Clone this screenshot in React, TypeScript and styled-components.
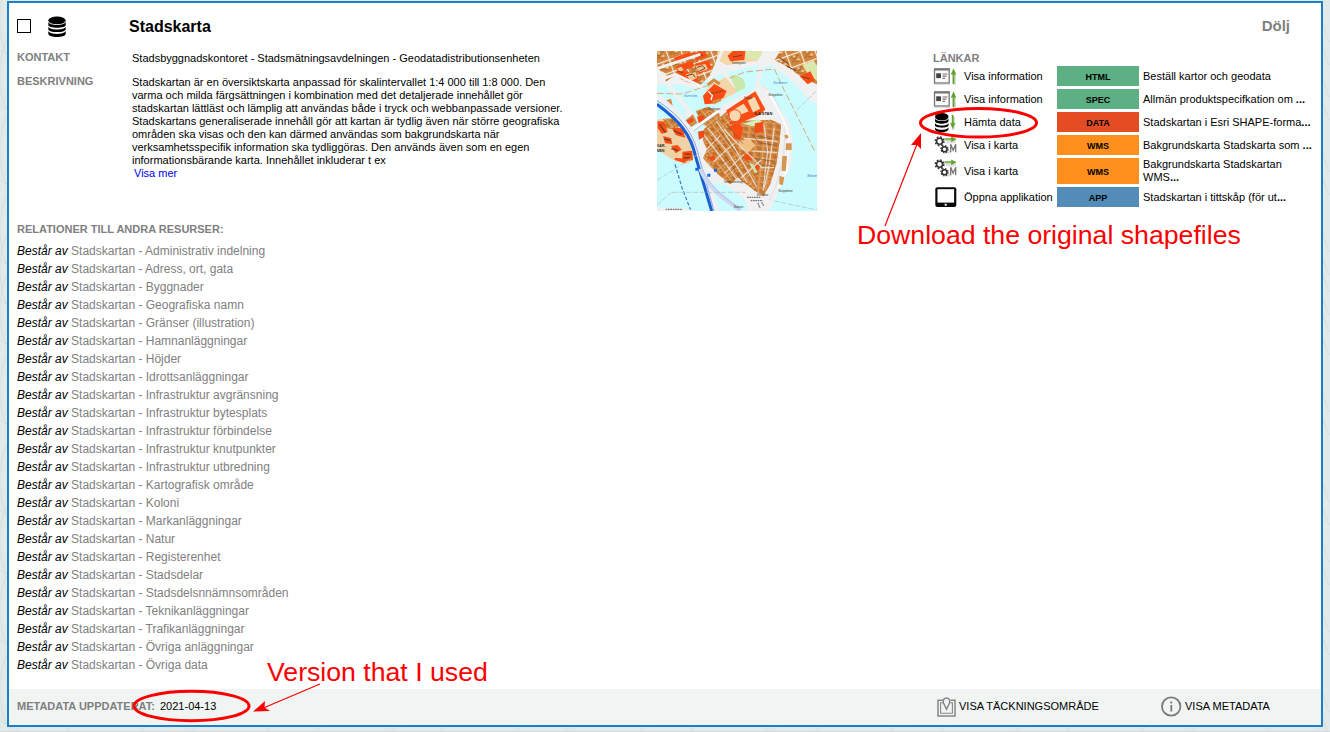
import React from "react";
import styled, { createGlobalStyle } from "styled-components";

const GlobalStyle = createGlobalStyle`
  html, body { margin: 0; padding: 0; }
  body {
    background: #e2eae9;
    font-family: "Liberation Sans", Arial, sans-serif;
    font-size: 11px;
    line-height: 13px;
    color: #000;
    overflow: hidden;
  }
`;

const Page = styled.div`
  position: relative;
  box-sizing: border-box;
  height: 732px;
  padding: 1px 7px 0;
  border-bottom: 1px solid #d4d8d8;
`;

const Backdrop = styled.svg`
  position: absolute;
  left: 0;
  top: 0;
`;

const Card = styled.article`
  position: relative;
  box-sizing: border-box;
  display: flex;
  flex-direction: column;
  height: 726px;
  border: 2px solid #1a7fc6;
  background: #fff;
`;

const Header = styled.header`
  display: flex;
  align-items: center;
  height: 48px;
  padding: 0 31px 0 8px;
`;

const CheckBox = styled.span`
  box-sizing: border-box;
  width: 14px;
  height: 14px;
  margin: 0 17px 2px 0;
  border: 1px solid #000;
  background: #fff;
`;

const TitleIcon = styled.div`
  display: flex;
  width: 81px;
`;

const Title = styled.h1`
  flex: 1;
  margin: 0 0 1px;
  font-size: 16px;
  line-height: 20px;
`;

const HideLink = styled.a`
  margin-bottom: 2px;
  color: #808080;
  font-size: 15px;
  line-height: 18px;
  font-weight: bold;
`;

const Details = styled.section`
  display: grid;
  grid-template-columns: 115px 525px 276px 1fr;
  height: 171px;
  padding-left: 8px;
`;

const Stack = styled.div<{ $top?: number }>`
  display: flex;
  flex-direction: column;
  gap: 11px;
  padding-top: ${(p) => p.$top ?? 0}px;
`;

const Label = styled.div`
  color: #808080;
  font-weight: bold;
`;

const Description = styled.p`
  margin: 0;
  white-space: pre-line;
`;

const More = styled.a`
  display: block;
  padding-left: 2px;
  color: #0000ee;
`;

const Links = styled.div`
  padding-top: 1px;
`;

const LinkTable = styled.div`
  display: flex;
  flex-direction: column;
  gap: 3px;
  margin-top: 1px;
`;

const LinkRow = styled.div<{ $tall?: boolean }>`
  display: grid;
  grid-template-columns: 31px 93px 82px 1fr;
  align-items: center;
  height: ${(p) => (p.$tall ? 26 : 20)}px;
`;

const IconCell = styled.div`
  align-self: start;
  height: 20px;
`;

const Badge = styled.div<{ $color: string }>`
  display: flex;
  align-items: center;
  justify-content: center;
  height: 100%;
  box-sizing: border-box;
  padding-top: 2px;
  background: ${(p) => p.$color};
  font-size: 9px;
  font-weight: bold;
`;

const LinkText = styled.div`
  padding-left: 4px;
  white-space: pre-line;
`;

const Relations = styled.section`
  flex: 1;
  padding: 1px 0 0 8px;
`;

const RelationList = styled.ul`
  margin: 6px 0 0;
  padding: 0;
  list-style: none;
  font-size: 12px;
  line-height: 18px;
  color: #808080;
`;

const Kind = styled.em`
  color: #000;
`;

const Footer = styled.footer`
  display: grid;
  grid-template-columns: 143px 777px 224px 1fr;
  align-items: center;
  height: 36px;
  padding: 0 0 1px 8px;
  box-sizing: border-box;
  background: #f0f4f3;
`;

const Action = styled.a`
  display: flex;
  align-items: center;
  gap: 3px;
`;

const Notes = styled.svg`
  position: absolute;
  left: 0;
  top: 0;
  pointer-events: none;
`;

const DatabaseIcon = () => (
  <svg width="18" height="22" viewBox="0 0 18 22">
    <ellipse cx="9" cy="4.400" rx="8.700" ry="3.900" />
    <path d="M.3 6C1.500 10 16.500 10 17.700 6V9C17.500 12.600.5 12.600.3 9Z" />
    <path d="M.3 10.700C2 14.400 16 14.400 17.700 10.700V13.200C17.500 17 .5 17 .3 13.200Z" />
    <path d="M.3 15.100C2 18.900 16 18.900 17.700 15.100V17.700C17.500 22 .5 22 .3 17.700Z" />
  </svg>
);

const InfoIcon = () => (
  <svg width="26" height="22" viewBox="0 0 26 22">
    <path d="M1 2.500h15.500M.8 18.500H17" stroke="#ddd" strokeWidth="1" />
    <rect x="1.500" y="3" width="14.700" height="14" fill="#fafafa" stroke="#777" strokeWidth="1.300" />
    <path d="M1 3.500h15.700" stroke="#777" strokeWidth="2" />
    <rect x="3.200" y="7.300" width="4.800" height="4.800" fill="#444" />
    <path d="M9.500 8h5M9.500 10.200h4M9.500 12.400h2.500" stroke="#777" strokeWidth="1.200" />
    <path d="M21.500 7v12" stroke="#ddd" strokeWidth="3" />
    <path d="M20.500 17.800V6" stroke="#60a62c" strokeWidth="1.900" />
    <path d="M20.500 2.300l2.700 6.200h-5.400z" fill="#60a62c" />
  </svg>
);

const DataIcon = () => (
  <svg width="26" height="22" viewBox="0 0 26 22">
    <g transform="translate(2 1) scale(.75 .9)">
      <ellipse cx="9" cy="4.200" rx="9" ry="4.200" />
      <path d="M0 6C2 10 16 10 18 6V9C17 13 1 13 0 9ZM0 11C2 15 16 15 18 11V14C17 17 1 17 0 14ZM0 16C2 19.500 16 19.500 18 16V18C17 22.500 1 22.500 0 18Z" />
    </g>
    <path d="M20.500 5v13" stroke="#ddd" strokeWidth="3" />
    <path d="M19.700 3v10" stroke="#60a62c" strokeWidth="1.900" />
    <path d="M19.700 17l-2.600-6h5.200z" fill="#60a62c" />
  </svg>
);

const MapServiceIcon = () => (
  <svg width="26" height="22" viewBox="0 0 26 22">
    <path d="M13 7h10M12 17h6" stroke="#e2e2e2" strokeWidth="3" />
    <g fill="none" stroke="#333">
      <circle cx="6.600" cy="6.300" r="3" strokeWidth="1.600" />
      <circle cx="6.600" cy="6.300" r="4.300" strokeWidth="1.500" strokeDasharray="1.700 1.677" />
      <circle cx="11.500" cy="14.200" r="2.500" strokeWidth="1.600" />
      <circle cx="11.500" cy="14.200" r="3.600" strokeWidth="1.300" strokeDasharray="1.400 1.428" />
      <path d="M17.700 17.200V9.300l2.500 6 2.500-6v7.900" stroke="#777" strokeWidth="1.300" />
    </g>
    <path d="M11.500 4.200h8" stroke="#8eb66d" strokeWidth="2.400" />
    <path d="M23.700 4.200l-5.500 3V1.400z" fill="#60a62c" />
  </svg>
);

const TabletIcon = () => (
  <svg width="26" height="22" viewBox="0 0 26 22">
    <rect x="2.300" y=".2" width="21" height="19.800" rx="2" fill="#0a0a0a" />
    <rect x="4.500" y="2.200" width="16.600" height="13.400" fill="#fff" />
    <circle cx="12.700" cy="17.800" r="1.200" fill="#ddd" />
  </svg>
);

const CoverageIcon = () => (
  <svg width="19" height="20" viewBox="0 0 19 20" fill="none" stroke="#858585">
    <path d="M5.800 3.200H1V19h17V3.200h-4.500" strokeWidth="1.500" />
    <path d="M6 5.800H3.600v10.500h11.800V5.800H13" strokeWidth="1.100" />
    <path d="M9.500 12.300L6.500 6C4.500-.6 14.500-.6 12.500 6Z" fill="#f4f6f6" strokeWidth="1.500" />
  </svg>
);

const MetadataIcon = () => (
  <svg width="21" height="21" viewBox="0 0 21 21">
    <circle cx="10.200" cy="10.500" r="9.200" fill="none" stroke="#7b7b7b" strokeWidth="1.800" />
    <path d="M10.300 9v6.400M10.300 5.500v1.900" stroke="#7b7b7b" strokeWidth="1.800" />
  </svg>
);

const island = "M172 262L205 240 238 212 252 250 285 240 346 238 372 236 402 250 398 300 388 370 370 430 350 464 325 450 300 432 272 410 250 430 212 400 168 352 180 325 168 300Z";
const westIsland = "M30 236L60 232 95 246 112 270 132 305 138 358 118 370 80 358 48 338 30 318Z";
const northBlocks = "M30 30H215L200 92 158 134 110 120 86 102 56 122 58 98 30 84Z";

const CityMap = () => (
  <svg width="160" height="160" viewBox="30 30 480 480" fontFamily="Liberation Sans, Arial, sans-serif">
    <defs>
      <pattern id="blocks" width="20" height="31" patternUnits="userSpaceOnUse" patternTransform="rotate(-38)">
        <rect width="20" height="31" fill="#d98232" />
        <path d="M0 0H20M0 0V31" stroke="#d9c8b8" strokeWidth="3" />
        <path d="M6 3v9l7 4v11M3 21l12-3M14 4l4 7" stroke="#8b572c" strokeWidth="1.800" fill="none" />
        <path d="M7 7h5v5H7z" fill="#eab06c" />
      </pattern>
      <pattern id="eastBlocks" width="24" height="18" patternUnits="userSpaceOnUse" patternTransform="rotate(7)">
        <rect width="24" height="18" fill="#dc8637" />
        <path d="M0 0H24M0 0V18" stroke="#d3c0ae" strokeWidth="2.500" />
        <path d="M4 5h8v4h9M8 12h10v4M16 2v5" stroke="#8e5b34" strokeWidth="1.800" fill="none" />
      </pattern>
      <pattern id="cityBlocks" width="42" height="37" patternUnits="userSpaceOnUse" patternTransform="rotate(-20)">
        <rect width="42" height="37" fill="#d4853a" />
        <path d="M0 0H42M0 0V37" stroke="#f5f3f2" strokeWidth="7" />
        <path d="M9 9h8v7h9V9h9M8 25l8-5 8 8 9-3" stroke="#855026" strokeWidth="2" fill="none" />
        <path d="M17 7h8v6h-8zM26 19h8v6h-8z" fill="#f5d7ad" />
      </pattern>
    </defs>
    <rect x="30" y="30" width="480" height="480" fill="#ccfbfd" />
    <path d="M30 30H510V190L462 145 420 96 376 70 346 83 240 90 170 121 156 145 86 128 30 132Z" fill="#f1f1f2" />
    <path d="M225 98L332 72 376 84 420 112 460 150 510 200V300H380L355 132 240 160Z" fill="#ccfbfd" />
    <path d={northBlocks} fill="url(#cityBlocks)" />
    <path d="M212 30H352L330 60 240 72 210 58Z" fill="#f4d6aa" />
    <path d="M295 30H350L332 56 298 51Z" fill="#dce9ad" />
    <path d="M400 30H510V130L480 118 450 98 408 70 382 58Z" fill="url(#cityBlocks)" />
    <path d="M466 72L500 58 510 74V120L480 95Z" fill="#dce9ad" />
    <g fill="#fa4d15">
      <path d="M80 50L128 32 138 48 90 68Z" />
      <path d="M86 78L135 58 142 75 94 95Z" />
      <path d="M138 36L174 30 182 46 148 60Z" />
      <path d="M144 68L184 58 194 82 157 98Z" />
      <path d="M84 98L110 88 158 107 145 132Z" />
      <path d="M242 44L257 30H295L292 57 250 61Z" />
      <path d="M458 106L490 91 504 118 482 130Z" />
    </g>
    <path d="M145 75l30-6 8 16-24 8zM116 100l31-6 3 17-19 9zM91 82l12-5 7 10-14 6z" fill="#f2c899" />
    <path d="M151 79l15-5 8 8-16 8M120 104l17-5 8 10M100 60l15-5M92 90l15 5M150 47l18-5M258 48l27-5M395 48l30 21M420 76l27 13M465 107l24 7" stroke="#704125" strokeWidth="3" fill="none" />
    <path d="M225 30L183 130M30 83L160 40M30 120L85 100 170 140M45 125L30 120M350 30L340 90" stroke="#f1f1f2" strokeWidth="9" fill="none" />
    <path d="M382 72L420 96 462 136 500 180" stroke="#f1f1f2" strokeWidth="16" fill="none" />
    <path d="M250 104C280 98 300 120 293 142L270 153 258 139Z" fill="#c8e9a9" />
    <path d="M342 70L329 148M230 85L260 145M62 128L140 228M140 228L112 218" stroke="#f0f0f0" strokeWidth="13" fill="none" />
    <path d="M30 157L105 159 220 122 295 93 382 84 412 148 503 330" fill="none" stroke="#dbab78" strokeWidth="3" strokeDasharray="20 8" />
    <path d="M168 166L185 137 235 108 272 152 230 175 205 190 174 190Z" fill="#f3d5a9" />
    <path d="M168 164L202 129 239 150 230 169 207 187 173 190Z" fill="#fa4d15" />
    <path d="M184 151l12 12-4 14" stroke="#fff" strokeWidth="4" fill="none" />
    <path d="M182 132l19-15 17 12M197 184l25-8" stroke="#d68b42" strokeWidth="9" fill="none" />
    <path d="M202 205L335 137 355 132 398 202 428 245 438 300 432 376 400 440 370 505 300 510 298 480 235 430 178 422 155 370 158 300Z" fill="#f0f0f1" />
    <path d="M345 132Q392 170 397 205L415 255 410 345 385 440 360 494" fill="none" stroke="#d6d6dc" strokeWidth="2" />
    <path d="M360 150Q412 225 426 290L419 390 395 440" fill="none" stroke="#fff" strokeWidth="5" />
    <path d={island} fill="url(#blocks)" />
    <path d="M285 240L346 238 402 250 398 300 388 370 350 464 320 448 332 380 270 320Z" fill="url(#eastBlocks)" />
    <path d="M146 210L183 197 215 213 226 245 190 263 168 250Z" fill="url(#blocks)" />
    <path d="M238 208L325 151 355 205 340 221 278 246 250 250Z" fill="#fa4d15" />
    <path d="M246 214L290 188 305 211 277 223 268 243 250 240ZM302 179L323 167 340 203 318 214Z" fill="#f6d9af" />
    <circle cx="264" cy="224" r="18" fill="#f6d9af" stroke="#fa4d15" strokeWidth="3" />
    <path d="M244 258L276 245 288 260 282 294 258 294 260 273Z" fill="#fa4d15" />
    <path d="M286 248L335 235 348 245 318 256Z" fill="#d4efb5" />
    <path d="M324 247l26-5-2 29-25 8zM291 343l16-8 9 20-20 6zM314 376l22-4-1 15-18 5zM186 350l14-7 6 12-12 7z" fill="#f34c17" />
    <path d="M276 300L308 292 325 314 303 335 278 321Z" fill="#f0c085" />
    <path d="M305 366l14 4 13 24-8 3z" fill="#c7e6aa" />
    <g fill="none" stroke="#e6dacd" strokeWidth="3.500">
      <path d="M168 278L222 350 274 422M183 261L245 337 300 425M208 240L265 325 329 437M230 264L284 320 348 382M350 247L362 330 348 450M382 260L368 365 352 440M178 325L220 284M199 363L260 308M232 397L291 340M270 421L350 350M290 292L392 301M314 330L390 334M340 380L381 380" />
    </g>
    <g fill="none" stroke="#805030" strokeWidth="1.800">
      <path d="M190 285l52 70 47 70M217 267l50 70M238 249l50 59M318 280l17 25 50 8M328 285l48 8M322 351l54 10M336 368l38 7M205 325l15-13M222 370l20-14M250 391l18-16" />
    </g>
    <path d={westIsland} fill="#efd3a7" />
    <path d="M48 234L75 232 97 253 88 267 55 261Z" fill="url(#blocks)" />
    <path d="M32 240l20 2 10 31-18 5-12-16zM75 260l33 2 6 28-28-8zM48 285l24 6 4 18-22-2zM72 315l20-3 12 14-18 11zM106 332l30-3 2 28-32 5zM84 350l38 4-8 13-31-10z" fill="#fa4d15" />
    <path d="M38 250l17 25M79 268l25 12M52 294l19 5M73 323l20 5M113 339l18 1M109 351l21-2" stroke="#783d20" strokeWidth="4" />
    <path d="M52 180l20-7 5 20-20 7zM110 242l28-22 13 25-28 20z" fill="#d28a4b" />
    <path d="M150 227l20-6 4 20-18 9zM153 272l20-4-2 20-15 8zM118 239l18-10 5 10-17 10z" fill="#f14a18" />
    <path d="M115 282L215 210" stroke="#fff" strokeWidth="10" />
    <path d="M115 287L214 216" stroke="#999" strokeWidth="2" />
    <path d="M30 166L80 209 130 270 155 340 180 420 207 510" fill="none" stroke="#eef0f4" strokeWidth="19" />
    <path d="M30 190C98 240 132 282 145 344L194 510" fill="none" stroke="#1b5fd0" strokeWidth="9" />
    <path d="M30 179C105 228 139 277 155 344L201 510" fill="none" stroke="#7ea7df" strokeWidth="3" />
    <path d="M160 383C178 429 205 455 280 508" fill="none" stroke="#cdd9f2" strokeWidth="13" />
    <path d="M165 382C184 425 217 462 280 505" fill="none" stroke="#a3b6dc" strokeWidth="2" />
    <path d="M84 370L105 440 132 510" fill="none" stroke="#2d75d4" strokeWidth="3.500" strokeDasharray="11 6" />
    <g fill="none" stroke="#aebebe" strokeWidth="2" strokeDasharray="16 5">
      <path d="M30 418L150 342M75 454H295M30 493L73 454M450 206L510 148M382 480L510 507" />
    </g>
    <path d="M201 383h9v9h-9zM181 398h9v9h-9zM145 380h9v9h-9z" fill="#1367e9" />
    <path d="M30 500L90 499 140 508V510H30ZM300 486L343 468 376 482 359 510H304Z" fill="#f1f1f2" />
    <path d="M56 505h50M300 469h42M311 479h36M333 486l6 15M344 484l6 10" stroke="#777" strokeWidth="4" strokeDasharray="5 2" />
    <path d="M412 283l10-2 3 9-9 3zM417 307h17v20h-18zM406 345h14l-4 45h-12zM397 405l15 4-5 24-10-3z" fill="#d69351" />
    <g fontSize="8" fill="#30302c">
      <text x="193" y="160" transform="rotate(-15 193 160)">Riksdagen</text>
      <text x="182" y="206">Mynttorget</text>
      <text x="291" y="173">Slottet</text>
      <text x="364" y="166">Skeppsbron</text>
      <text x="232" y="425">Kornhamnstorg</text>
      <text x="394" y="453">Skeppsbron</text>
      <text x="260" y="500">Slussen</text>
      <text x="329" y="466">Slussplan</text>
      <text x="254" y="68">Strömgatan</text>
    </g>
    <g fontWeight="bold" fill="#27231e">
      <text x="322" y="223" fontSize="12">ILA STAN</text>
      <text x="30" y="319" fontSize="10">GAR-</text>
      <text x="30" y="332" fontSize="10">MEN</text>
    </g>
    <g fill="#3182d6" fontStyle="italic">
      <text x="111" y="169" fontSize="9">Norrström</text>
      <text x="379" y="130" fontSize="9">Strömmen</text>
      <text x="480" y="407" fontSize="12">Ström</text>
    </g>
  </svg>
);

const links = [
  { Icon: InfoIcon, action: "Visa information", tag: "HTML", color: "#5daf84", text: "Beställ kartor och geodata", more: "" },
  { Icon: InfoIcon, action: "Visa information", tag: "SPEC", color: "#5daf84", text: "Allmän produktspecifkation om ", more: "..." },
  { Icon: DataIcon, action: "Hämta data", tag: "DATA", color: "#e44d24", text: "Stadskartan i Esri SHAPE-forma", more: "..." },
  { Icon: MapServiceIcon, action: "Visa i karta", tag: "WMS", color: "#ff901d", text: "Bakgrundskarta Stadskarta som ", more: "..." },
  { Icon: MapServiceIcon, action: "Visa i karta", tag: "WMS", color: "#ff901d", text: "Bakgrundskarta Stadskartan\nWMS", more: "...", tall: true },
  { Icon: TabletIcon, action: "Öppna applikation", tag: "APP", color: "#548cb8", text: "Stadskartan i tittskåp (för ut", more: "..." },
];

const relations = [
  "Administrativ indelning", "Adress, ort, gata", "Byggnader", "Geografiska namn",
  "Gränser (illustration)", "Hamnanläggningar", "Höjder", "Idrottsanläggningar",
  "Infrastruktur avgränsning", "Infrastruktur bytesplats", "Infrastruktur förbindelse",
  "Infrastruktur knutpunkter", "Infrastruktur utbredning", "Kartografisk område", "Koloni",
  "Markanläggningar", "Natur", "Registerenhet", "Stadsdelar", "Stadsdelsnnämnsområden",
  "Teknikanläggningar", "Trafikanläggningar", "Övriga anläggningar", "Övriga data",
];

const description = `Stadskartan är en översiktskarta anpassad för skalintervallet 1:4 000 till 1:8 000. Den
varma och milda färgsättningen i kombination med det detaljerade innehållet gör
stadskartan lättläst och lämplig att användas både i tryck och webbanpassade versioner.
Stadskartans generaliserade innehåll gör att kartan är tydlig även när större geografiska
områden ska visas och den kan därmed användas som bakgrundskarta när
verksamhetsspecifik information ska tydliggöras. Den används även som en egen
informationsbärande karta. Innehållet inkluderar t ex`;

const contours = [20, 75, 150, 230, 270, 310, 390, 480, 540, 610, 690];

export default function App() {
  return (
    <>
      <GlobalStyle />
      <Page>
        <Backdrop width="1330" height="731" fill="none" stroke="#d5dfdd">
          {contours.map((y) => (
            <g key={y}>
              <ellipse cx="12" cy={y} rx="12" ry="38" />
              <path d={`M0 ${y + 30}l8 5M1322 ${y}q5 20 8 22M1322 ${y + 25}q5 18 8 20`} />
            </g>
          ))}
          {contours.map((y, i) => (
            <path key={y} d={`M${i * 125 + 15} 731q9-8 15-4M${i * 125 + 65} 731l7-5`} />
          ))}
        </Backdrop>
        <Card>
          <Header>
            <CheckBox />
            <TitleIcon><DatabaseIcon /></TitleIcon>
            <Title>Stadskarta</Title>
            <HideLink>Dölj</HideLink>
          </Header>
          <Details>
            <Stack>
              <Label>KONTAKT</Label>
              <Label>BESKRIVNING</Label>
            </Stack>
            <Stack $top={1}>
              <div>Stadsbyggnadskontoret - Stadsmätningsavdelningen - Geodatadistributionsenheten</div>
              <div>
                <Description>{description}</Description>
                <More>Visa mer</More>
              </div>
            </Stack>
            <CityMap />
            <Links>
              <Label>LÄNKAR</Label>
              <LinkTable>
                {links.map(({ Icon, action, tag, color, text, more, tall }, i) => (
                  <LinkRow key={i} $tall={tall}>
                    <IconCell><Icon /></IconCell>
                    <span>{action}</span>
                    <Badge $color={color}>{tag}</Badge>
                    <LinkText>{text}<b>{more}</b></LinkText>
                  </LinkRow>
                ))}
              </LinkTable>
            </Links>
          </Details>
          <Relations>
            <Label>RELATIONER TILL ANDRA RESURSER:</Label>
            <RelationList>
              {relations.map((name) => (
                <li key={name}><Kind>Består av</Kind> Stadskartan - {name}</li>
              ))}
            </RelationList>
          </Relations>
          <Footer>
            <Label>METADATA UPPDATERAT:</Label>
            <span>2021-04-13</span>
            <Action><CoverageIcon />VISA TÄCKNINGSOMRÅDE</Action>
            <Action><MetadataIcon />VISA METADATA</Action>
          </Footer>
        </Card>
        <Notes width="1330" height="732" fontFamily="Liberation Sans, Arial, sans-serif" fontSize="26.670" fill="#fb0000">
          <ellipse cx="978.500" cy="122.800" rx="58" ry="14.300" fill="none" stroke="#fb0000" strokeWidth="3" />
          <ellipse cx="191.500" cy="706" rx="57.500" ry="14.700" fill="none" stroke="#fb0000" strokeWidth="3" />
          <path d="M885 226L919 139M320 684L261 709" stroke="#fb0000" strokeWidth="1.200" />
          <path d="M921 133L921 149 917 145 911 145Z" />
          <path d="M253 711.500L265 701 264.500 707.500 270 711Z" />
          <text x="857" y="244">Download the original shapefiles</text>
          <text x="267" y="681.400">Version that I used</text>
        </Notes>
      </Page>
    </>
  );
}
